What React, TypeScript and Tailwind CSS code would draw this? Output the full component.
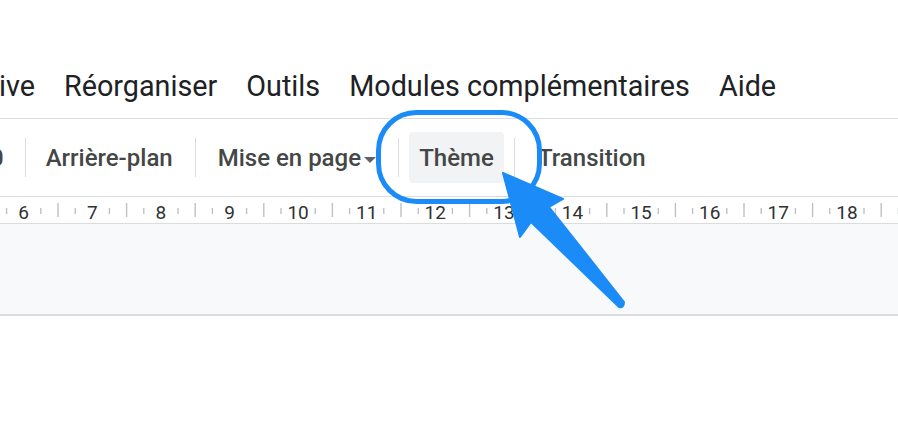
import React from "react";

const menu = ["ive", "Réorganiser", "Outils", "Modules complémentaires", "Aide"];
const nums = [6, 7, 8, 9, 10, 11, 12, 13, 14, 15, 16, 17, 18];

function Sep({ className = "" }: { className?: string }) {
  return <div className={`w-px h-[39px] bg-[#dadce0] ${className}`} />;
}

function Ruler() {
  const step = 68.6;
  const ticks: React.ReactNode[] = [];
  for (let k = -1; k < 14; k++) {
    const tall = 58 + k * step;
    ticks.push(<line key={`t${k}`} x1={tall} x2={tall} y1={6} y2={20} />);
    ticks.push(<line key={`a${k}`} x1={tall - 17.2} x2={tall - 17.2} y1={11} y2={17} />);
    ticks.push(<line key={`b${k}`} x1={tall + 17.2} x2={tall + 17.2} y1={11} y2={17} />);
  }
  return (
    <svg width="898" height="26" className="block">
      <g stroke="#bdc1c6" strokeWidth="1.4">{ticks}</g>
      {nums.map((n, i) => (
        <text
          key={n}
          x={23.7 + i * step}
          y={21.5}
          textAnchor="middle"
          fontSize="19"
          fill="#303134"
          fontFamily="Roboto, sans-serif"
        >
          {n}
        </text>
      ))}
    </svg>
  );
}

export default function App() {
  return (
    <div
      className="relative w-[898px] h-[434px] overflow-hidden bg-white"
      style={{ fontFamily: "Roboto, 'Liberation Sans', sans-serif" }}
    >
      {/* Menu bar */}
      <div className="h-[118px] pt-[69px] flex gap-[29px] text-[28.75px] leading-[34px] text-[#202124] whitespace-nowrap">
        {menu.map((m, i) => (
          <span key={m} className={i === 0 ? "-ml-px" : ""}>
            {m}
          </span>
        ))}
      </div>

      {/* Toolbar */}
      <div className="h-[78px] border-t border-[#dadce0] flex items-center text-[24px] font-medium text-[#444746] whitespace-nowrap">
        <span className="-ml-[10px]">0</span>
        <Sep className="ml-[21px]" />
        <span className="ml-[20px]">Arrière-plan</span>
        <Sep className="ml-[22px]" />
        <span className="ml-[22px]">Mise en page</span>
        <span className="ml-[3px] mt-[4px] w-0 h-0 border-l-[6px] border-r-[6px] border-t-[6px] border-l-transparent border-r-transparent border-t-[#5f6368]" />
        <Sep className="ml-[22px]" />
        <div className="ml-[10px] w-[95px] h-[51px] rounded-[4px] bg-[#f1f3f4] flex items-center justify-center">
          Thème
        </div>
        <Sep className="ml-[10px]" />
        <span className="ml-[23px]">Transition</span>
      </div>

      {/* Ruler */}
      <div className="border-t border-b border-[#dadce0] h-[28px]">
        <Ruler />
      </div>

      {/* Slide area */}
      <div className="h-[92px] bg-[#f8f9fa] border-b-2 border-[#dadce0]" />

      {/* Annotation overlay */}
      <svg className="absolute inset-0 pointer-events-none" width="898" height="434">
        <rect x="378.5" y="112.5" width="161" height="89" rx="38" fill="none" stroke="#1b8cf7" strokeWidth="5" />
        <path
          d="M503 173 L563 199 L549 207 L624 302 Q624 308 619 307 L531 222 L520 237 Z"
          fill="#1b8cf7"
          stroke="#1b8cf7"
          strokeWidth="2"
          strokeLinejoin="round"
        />
      </svg>
    </div>
  );
}
